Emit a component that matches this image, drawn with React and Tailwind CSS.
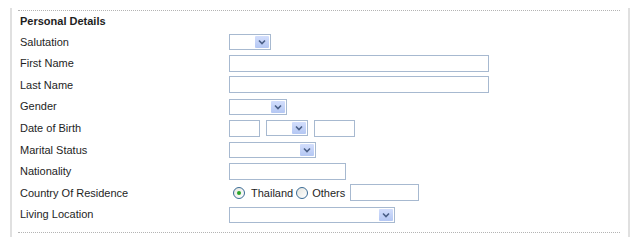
const labelCls = 'w-[209px] shrink-0';

const SelectBox = ({ width }) => (
  <div className={`${width} h-[16px] border border-[#a7b9d0] bg-white flex justify-end items-stretch p-px`}>
    <div className="w-[14px] bg-gradient-to-b from-[#d3defc] to-[#b4c7f3] flex items-center justify-center rounded-[1px]">
      <svg width="8" height="6" viewBox="0 0 8 6">
        <path d="M1 1.5 L4 4.5 L7 1.5" fill="none" stroke="#4a5f86" strokeWidth="1.6" />
      </svg>
    </div>
  </div>
);

const TextBox = ({ width }) => (
  <div className={`${width} h-[17px] border border-[#a7b9d0] bg-white`} />
);

const Radio = ({ checked }) => (
  <span className="w-[12px] h-[12px] rounded-full border border-[#3a6b95] bg-gradient-to-br from-[#e6e6e0] to-white flex items-center justify-center">
    {checked && <span className="w-[4px] h-[4px] rounded-full bg-[#2aa52a]" />}
  </span>
);

const Row = ({ label, children }) => (
  <div className="h-[21.6px] flex items-center">
    <span className={labelCls}>{label}</span>
    {children}
  </div>
);

export default function App() {
  return (
    <div className="w-[642px] h-[244px] bg-white pt-[8px] text-[11px] text-[#1e1e1e]" style={{ fontFamily: '"Liberation Sans", Arial, sans-serif' }}>
      <div className="ml-[10px] w-[620px] h-[229px] border-x-2 border-[#e0e0e0] pl-[6px] pr-[8px] pt-[2px]">
        <div className="border-y border-dotted border-[#b4b4b4] pl-[2px] pb-[7px]">
          <div className="h-[20px] flex items-center font-bold">Personal Details</div>
          <Row label="Salutation">
            <SelectBox width="w-[42px]" />
          </Row>
          <Row label="First Name">
            <TextBox width="w-[260px]" />
          </Row>
          <Row label="Last Name">
            <TextBox width="w-[260px]" />
          </Row>
          <Row label="Gender">
            <SelectBox width="w-[58px]" />
          </Row>
          <Row label="Date of Birth">
            <div className="flex items-center">
              <TextBox width="w-[31px]" />
              <div className="ml-[6px]">
                <SelectBox width="w-[42px]" />
              </div>
              <div className="ml-[6px]">
                <TextBox width="w-[41px]" />
              </div>
            </div>
          </Row>
          <Row label="Marital Status">
            <SelectBox width="w-[87px]" />
          </Row>
          <Row label="Nationality">
            <TextBox width="w-[117px]" />
          </Row>
          <Row label="Country Of Residence">
            <div className="flex items-center">
              <span className="ml-[4px]"><Radio checked /></span>
              <span className="ml-[6px]">Thailand</span>
              <span className="ml-[3px]"><Radio /></span>
              <span className="ml-[4px]">Others</span>
              <span className="ml-[5px]"><TextBox width="w-[69px]" /></span>
            </div>
          </Row>
          <Row label="Living Location">
            <SelectBox width="w-[166px]" />
          </Row>
        </div>
      </div>
    </div>
  );
}
